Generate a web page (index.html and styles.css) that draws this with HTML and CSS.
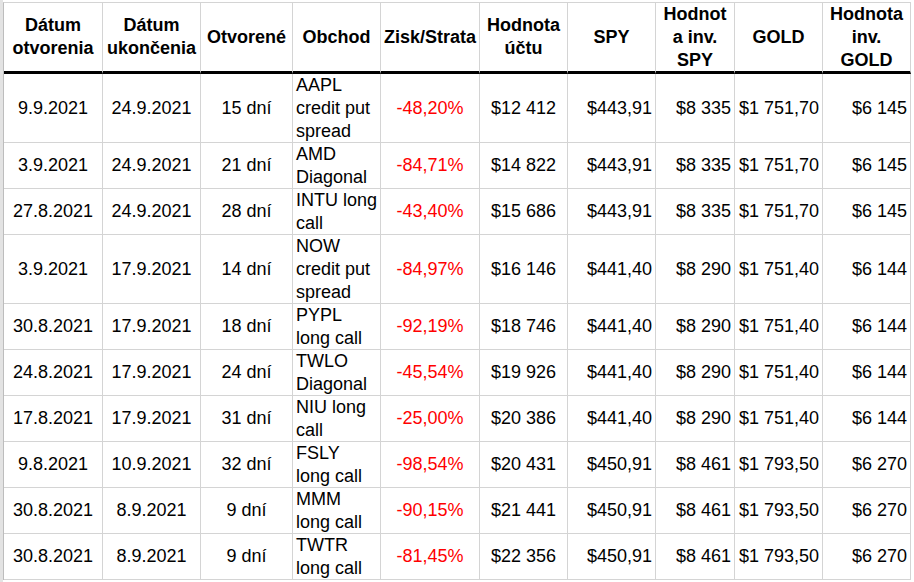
FILE: index.html
```html
<!DOCTYPE html>
<html lang="sk">
<head>
<meta charset="utf-8">
<title>Obchody</title>
<link rel="stylesheet" href="styles.css">
</head>
<body>
<div class="sheet">
  <div class="edge"></div>
  <div class="grid">
    <div class="c h">Dátum<br>otvorenia</div>
    <div class="c h">Dátum<br>ukončenia</div>
    <div class="c h">Otvorené</div>
    <div class="c h">Obchod</div>
    <div class="c h">Zisk/Strata</div>
    <div class="c h">Hodnota<br>účtu</div>
    <div class="c h">SPY</div>
    <div class="c h">Hodnot<br>a inv.<br>SPY</div>
    <div class="c h">GOLD</div>
    <div class="c h">Hodnota<br>inv.<br>GOLD</div>

    <div class="c ctr">9.9.2021</div><div class="c ctr">24.9.2021</div><div class="c ctr">15 dní</div><div class="c lft">AAPL<br>credit put<br>spread</div><div class="c ctr neg">-48,20%</div><div class="c ctr">$12 412</div><div class="c rgt">$443,91</div><div class="c rgt">$8 335</div><div class="c rgt">$1 751,70</div><div class="c rgt">$6 145</div>

    <div class="c ctr">3.9.2021</div><div class="c ctr">24.9.2021</div><div class="c ctr">21 dní</div><div class="c lft">AMD<br>Diagonal</div><div class="c ctr neg">-84,71%</div><div class="c ctr">$14 822</div><div class="c rgt">$443,91</div><div class="c rgt">$8 335</div><div class="c rgt">$1 751,70</div><div class="c rgt">$6 145</div>

    <div class="c ctr">27.8.2021</div><div class="c ctr">24.9.2021</div><div class="c ctr">28 dní</div><div class="c lft">INTU long<br>call</div><div class="c ctr neg">-43,40%</div><div class="c ctr">$15 686</div><div class="c rgt">$443,91</div><div class="c rgt">$8 335</div><div class="c rgt">$1 751,70</div><div class="c rgt">$6 145</div>

    <div class="c ctr">3.9.2021</div><div class="c ctr">17.9.2021</div><div class="c ctr">14 dní</div><div class="c lft">NOW<br>credit put<br>spread</div><div class="c ctr neg">-84,97%</div><div class="c ctr">$16 146</div><div class="c rgt">$441,40</div><div class="c rgt">$8 290</div><div class="c rgt">$1 751,40</div><div class="c rgt">$6 144</div>

    <div class="c ctr">30.8.2021</div><div class="c ctr">17.9.2021</div><div class="c ctr">18 dní</div><div class="c lft">PYPL<br>long call</div><div class="c ctr neg">-92,19%</div><div class="c ctr">$18 746</div><div class="c rgt">$441,40</div><div class="c rgt">$8 290</div><div class="c rgt">$1 751,40</div><div class="c rgt">$6 144</div>

    <div class="c ctr">24.8.2021</div><div class="c ctr">17.9.2021</div><div class="c ctr">24 dní</div><div class="c lft">TWLO<br>Diagonal</div><div class="c ctr neg">-45,54%</div><div class="c ctr">$19 926</div><div class="c rgt">$441,40</div><div class="c rgt">$8 290</div><div class="c rgt">$1 751,40</div><div class="c rgt">$6 144</div>

    <div class="c ctr">17.8.2021</div><div class="c ctr">17.9.2021</div><div class="c ctr">31 dní</div><div class="c lft">NIU long<br>call</div><div class="c ctr neg">-25,00%</div><div class="c ctr">$20 386</div><div class="c rgt">$441,40</div><div class="c rgt">$8 290</div><div class="c rgt">$1 751,40</div><div class="c rgt">$6 144</div>

    <div class="c ctr">9.8.2021</div><div class="c ctr">10.9.2021</div><div class="c ctr">32 dní</div><div class="c lft">FSLY<br>long call</div><div class="c ctr neg">-98,54%</div><div class="c ctr">$20 431</div><div class="c rgt">$450,91</div><div class="c rgt">$8 461</div><div class="c rgt">$1 793,50</div><div class="c rgt">$6 270</div>

    <div class="c ctr">30.8.2021</div><div class="c ctr">8.9.2021</div><div class="c ctr">9 dní</div><div class="c lft">MMM<br>long call</div><div class="c ctr neg">-90,15%</div><div class="c ctr">$21 441</div><div class="c rgt">$450,91</div><div class="c rgt">$8 461</div><div class="c rgt">$1 793,50</div><div class="c rgt">$6 270</div>

    <div class="c ctr">30.8.2021</div><div class="c ctr">8.9.2021</div><div class="c ctr">9 dní</div><div class="c lft">TWTR<br>long call</div><div class="c ctr neg">-81,45%</div><div class="c ctr">$22 356</div><div class="c rgt">$450,91</div><div class="c rgt">$8 461</div><div class="c rgt">$1 793,50</div><div class="c rgt">$6 270</div>
  </div>
</div>
</body>
</html>
```

FILE: styles.css
```css
html, body {
  margin: 0;
  padding: 0;
  background: #ffffff;
}

body {
  font-family: "Liberation Sans", Arial, sans-serif;
  font-size: 18px;
  color: #000000;
  overflow: hidden;
}

.sheet {
  display: flex;
  align-items: stretch;
  height: 582px;
}

.edge {
  width: 3px;
  flex: 0 0 3px;
  background: #e3e3e3;
}

.grid {
  display: grid;
  grid-template-columns: 99px 98px 92px 88px 99px 88px 88px 79px 88px 88px;
  grid-template-rows: 71px 69px 46px 46px 69px 46px 46px 46px 46px 46px 46px;
  align-self: flex-start;
  margin-top: 2px;
  border-top: 1px solid #d4d4d4;
  border-left: 1px solid #bdbdbd;
}

.c {
  box-sizing: border-box;
  display: flex;
  align-items: center;
  line-height: 23px;
  white-space: nowrap;
  border-right: 1px solid #d4d4d4;
  border-bottom: 1px solid #d4d4d4;
  overflow: visible;
}

.h {
  font-weight: bold;
  justify-content: center;
  text-align: center;
  border-bottom: 3px solid #000000;
}

.ctr {
  justify-content: center;
  text-align: center;
}

.lft {
  justify-content: flex-start;
  text-align: left;
  padding-left: 3px;
}

.rgt {
  justify-content: flex-end;
  text-align: right;
  padding-right: 3px;
}

.neg {
  color: #ff0000;
}
```
